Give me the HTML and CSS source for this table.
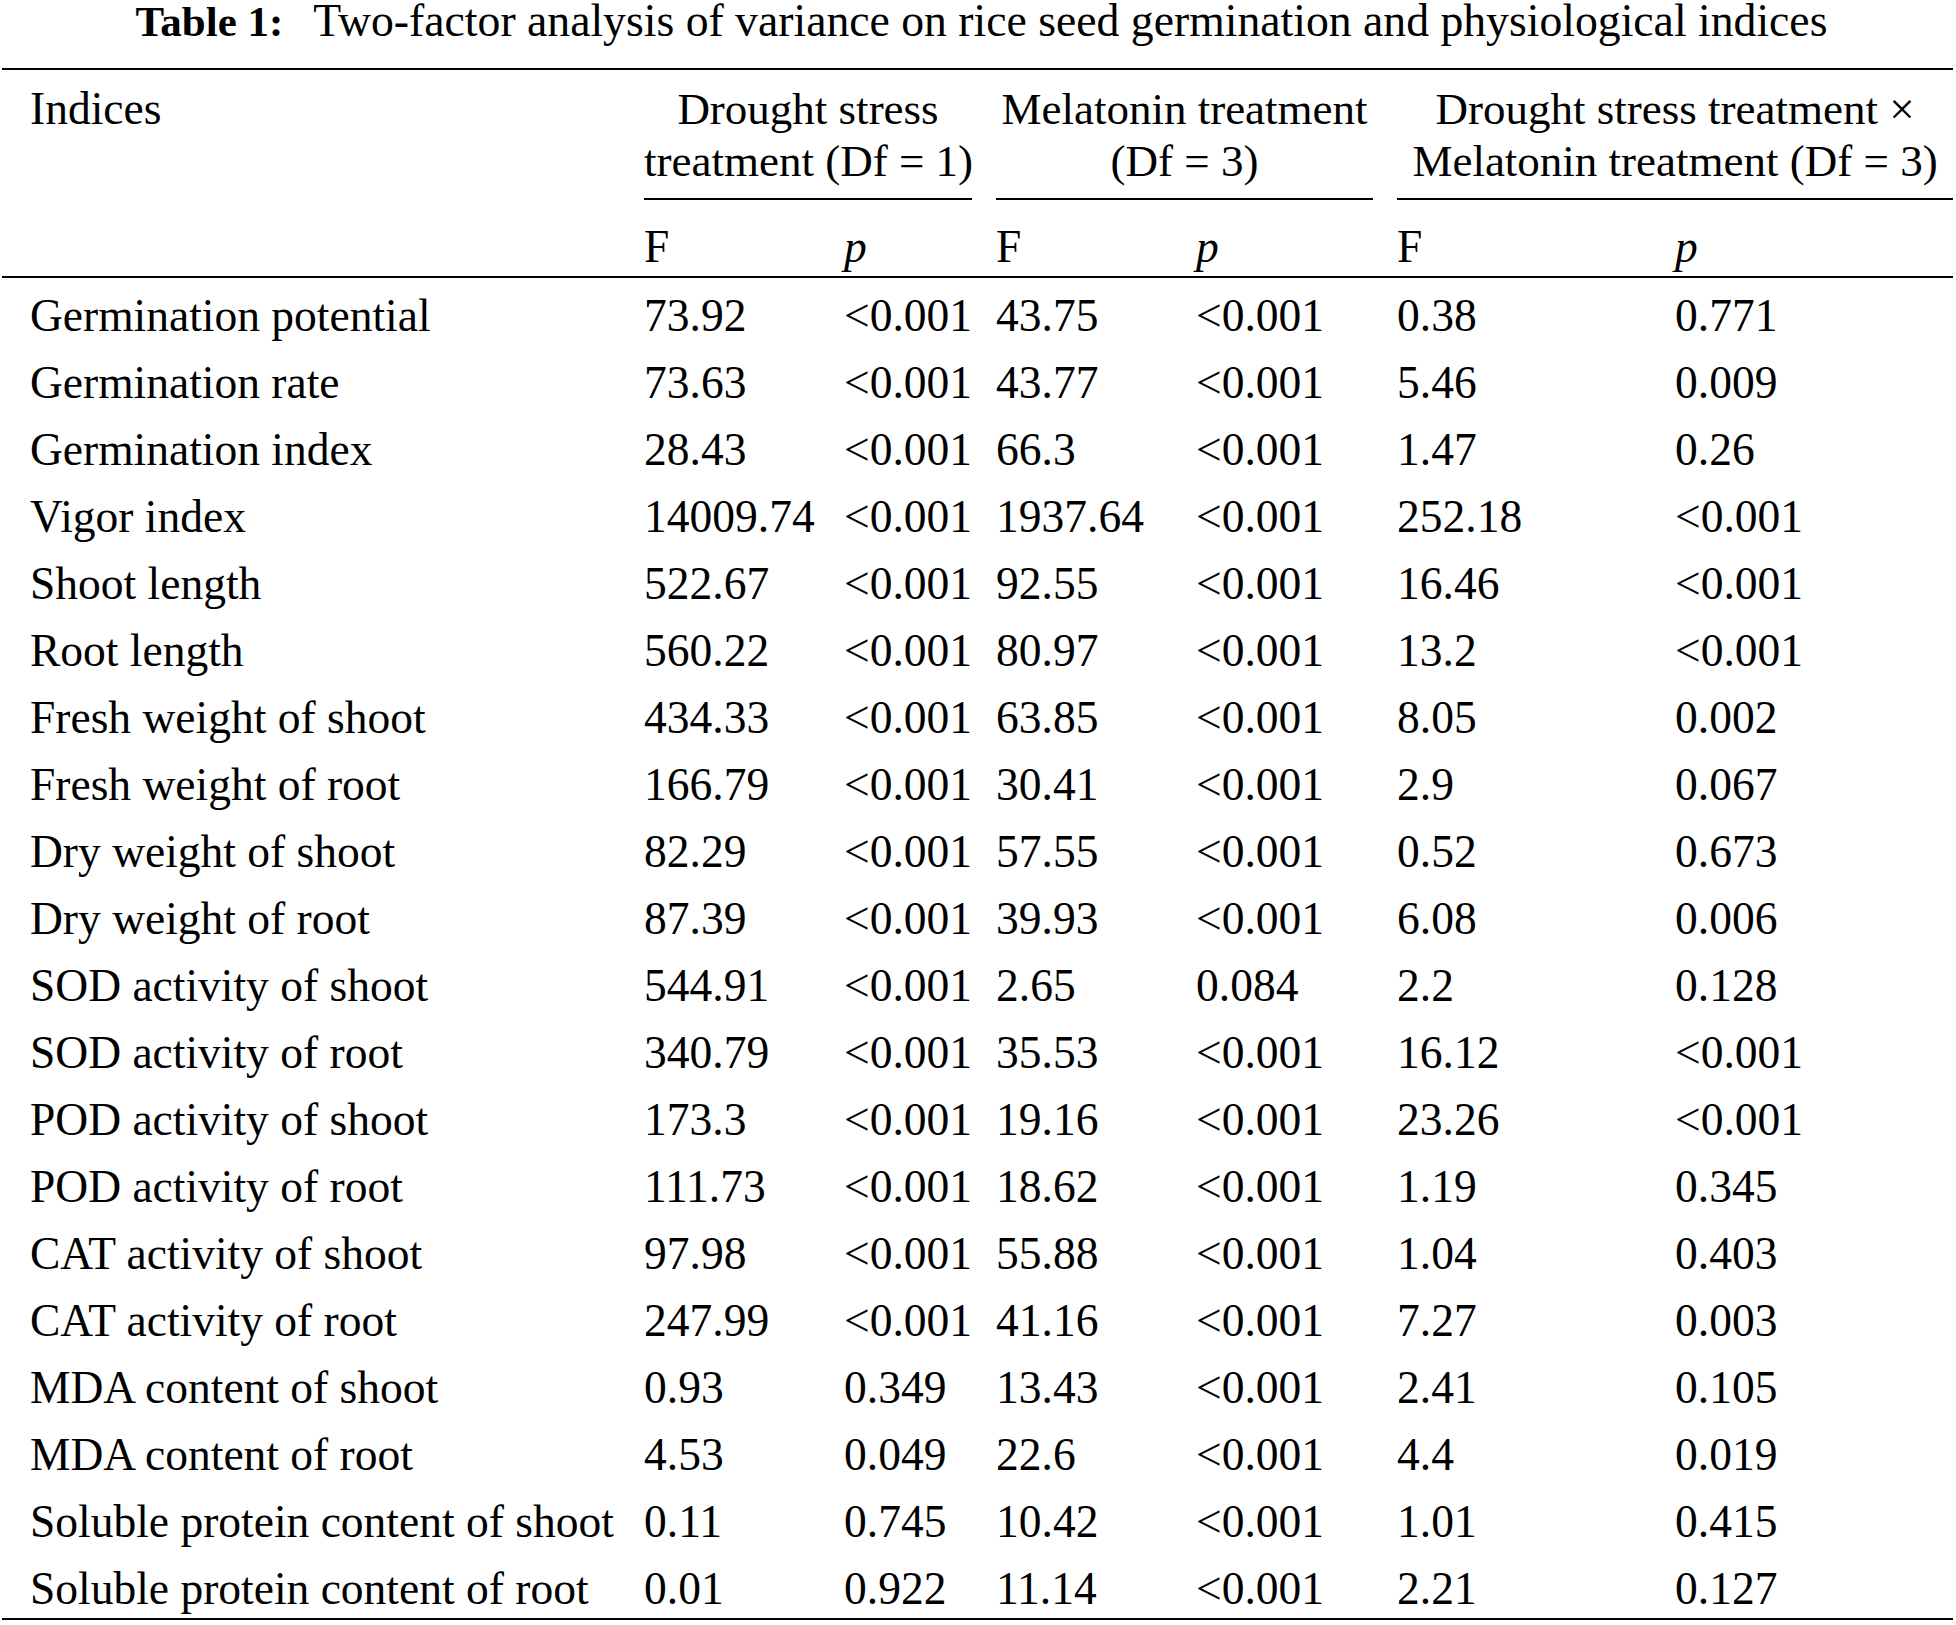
FILE: index.html
```html
<!DOCTYPE html>
<html lang="en">
<head>
<meta charset="utf-8">
<title>Table 1</title>
<link rel="stylesheet" href="styles.css">
</head>
<body>
<div class="page">
  <div class="caption"><span class="cap-label">Table 1:</span><span class="cap-text">Two-factor analysis of variance on rice seed germination and physiological indices</span></div>
  <table class="anova">
    <colgroup>
      <col class="c-idx"><col class="c-f1"><col class="c-p1"><col class="c-f2"><col class="c-p2"><col class="c-f3"><col class="c-p3">
    </colgroup>
    <thead>
      <tr class="h1">
        <th class="idx" rowspan="2">Indices</th>
        <th colspan="2" class="grp"><div class="span-rule">Drought stress<br>treatment (Df = 1)</div></th>
        <th colspan="2" class="grp"><div class="span-rule">Melatonin treatment<br>(Df = 3)</div></th>
        <th colspan="2" class="grp last"><div class="span-rule">Drought stress treatment ×<br>Melatonin treatment (Df = 3)</div></th>
      </tr>
      <tr class="h2">
        <th>F</th><th><i>p</i></th><th>F</th><th><i>p</i></th><th>F</th><th><i>p</i></th>
      </tr>
    </thead>
    <tbody>
      <tr><td>Germination potential</td><td>73.92</td><td>&lt;0.001</td><td>43.75</td><td>&lt;0.001</td><td>0.38</td><td>0.771</td></tr>
      <tr><td>Germination rate</td><td>73.63</td><td>&lt;0.001</td><td>43.77</td><td>&lt;0.001</td><td>5.46</td><td>0.009</td></tr>
      <tr><td>Germination index</td><td>28.43</td><td>&lt;0.001</td><td>66.3</td><td>&lt;0.001</td><td>1.47</td><td>0.26</td></tr>
      <tr><td>Vigor index</td><td>14009.74</td><td>&lt;0.001</td><td>1937.64</td><td>&lt;0.001</td><td>252.18</td><td>&lt;0.001</td></tr>
      <tr><td>Shoot length</td><td>522.67</td><td>&lt;0.001</td><td>92.55</td><td>&lt;0.001</td><td>16.46</td><td>&lt;0.001</td></tr>
      <tr><td>Root length</td><td>560.22</td><td>&lt;0.001</td><td>80.97</td><td>&lt;0.001</td><td>13.2</td><td>&lt;0.001</td></tr>
      <tr><td>Fresh weight of shoot</td><td>434.33</td><td>&lt;0.001</td><td>63.85</td><td>&lt;0.001</td><td>8.05</td><td>0.002</td></tr>
      <tr><td>Fresh weight of root</td><td>166.79</td><td>&lt;0.001</td><td>30.41</td><td>&lt;0.001</td><td>2.9</td><td>0.067</td></tr>
      <tr><td>Dry weight of shoot</td><td>82.29</td><td>&lt;0.001</td><td>57.55</td><td>&lt;0.001</td><td>0.52</td><td>0.673</td></tr>
      <tr><td>Dry weight of root</td><td>87.39</td><td>&lt;0.001</td><td>39.93</td><td>&lt;0.001</td><td>6.08</td><td>0.006</td></tr>
      <tr><td>SOD activity of shoot</td><td>544.91</td><td>&lt;0.001</td><td>2.65</td><td>0.084</td><td>2.2</td><td>0.128</td></tr>
      <tr><td>SOD activity of root</td><td>340.79</td><td>&lt;0.001</td><td>35.53</td><td>&lt;0.001</td><td>16.12</td><td>&lt;0.001</td></tr>
      <tr><td>POD activity of shoot</td><td>173.3</td><td>&lt;0.001</td><td>19.16</td><td>&lt;0.001</td><td>23.26</td><td>&lt;0.001</td></tr>
      <tr><td>POD activity of root</td><td>111.73</td><td>&lt;0.001</td><td>18.62</td><td>&lt;0.001</td><td>1.19</td><td>0.345</td></tr>
      <tr><td>CAT activity of shoot</td><td>97.98</td><td>&lt;0.001</td><td>55.88</td><td>&lt;0.001</td><td>1.04</td><td>0.403</td></tr>
      <tr><td>CAT activity of root</td><td>247.99</td><td>&lt;0.001</td><td>41.16</td><td>&lt;0.001</td><td>7.27</td><td>0.003</td></tr>
      <tr><td>MDA content of shoot</td><td>0.93</td><td>0.349</td><td>13.43</td><td>&lt;0.001</td><td>2.41</td><td>0.105</td></tr>
      <tr><td>MDA content of root</td><td>4.53</td><td>0.049</td><td>22.6</td><td>&lt;0.001</td><td>4.4</td><td>0.019</td></tr>
      <tr><td>Soluble protein content of shoot</td><td>0.11</td><td>0.745</td><td>10.42</td><td>&lt;0.001</td><td>1.01</td><td>0.415</td></tr>
      <tr class="last-row"><td>Soluble protein content of root</td><td>0.01</td><td>0.922</td><td>11.14</td><td>&lt;0.001</td><td>2.21</td><td>0.127</td></tr>
    </tbody>
  </table>
</div>
</body>
</html>
```
FILE: styles.css
```css
html, body {
  margin: 0;
  padding: 0;
  background: #ffffff;
}

body {
  font-family: "Liberation Serif", "Times New Roman", serif;
  color: #000000;
}

.page {
  width: 1951px;
  padding: 0 3px 0 2px;
}

.caption {
  font-size: 45.7px;
  line-height: 42px;
  text-align: center;
  white-space: nowrap;
  margin-bottom: 25px;
  padding-left: 8px;
}

.cap-label {
  font-weight: bold;
  font-size: 43px;
  margin-right: 30px;
}

.anova {
  width: 1951px;
  table-layout: fixed;
  border-collapse: collapse;
  border-spacing: 0;
  font-size: 45.5px;
}

.c-idx { width: 630px; }
.c-f1 { width: 200px; }
.c-p1 { width: 152px; }
.c-f2 { width: 200px; }
.c-p2 { width: 201px; }
.c-f3 { width: 278px; }
.c-p3 { width: 290px; }

.anova th,
.anova td {
  padding: 0 12px;
  text-align: left;
  font-weight: normal;
  white-space: nowrap;
  vertical-align: top;
}

.anova thead {
  border-top: 2px solid #000;
  border-bottom: 2px solid #000;
}

.anova th {
  line-height: 52px;
}

.anova th.idx {
  padding-left: 28px;
  padding-top: 13px;
}

.h1 th.grp {
  padding: 13px 0 0 0;
  text-align: center;
  font-size: 45px;
}

.span-rule {
  margin: 0 12px;
  padding-bottom: 11px;
  border-bottom: 2px solid #000;
}

.h1 th.last .span-rule {
  margin-right: 0;
}

.h2 th {
  padding-top: 21px;
  padding-bottom: 3px;
}

.anova td {
  line-height: 67px;
}

.anova td:first-child {
  padding-left: 28px;
}

.anova tbody tr:first-child td {
  padding-top: 4px;
}

.anova tbody {
  border-bottom: 2px solid #000;
}

.anova tbody tr.last-row td {
  line-height: 59px;
  padding-top: 4px;
}
```
